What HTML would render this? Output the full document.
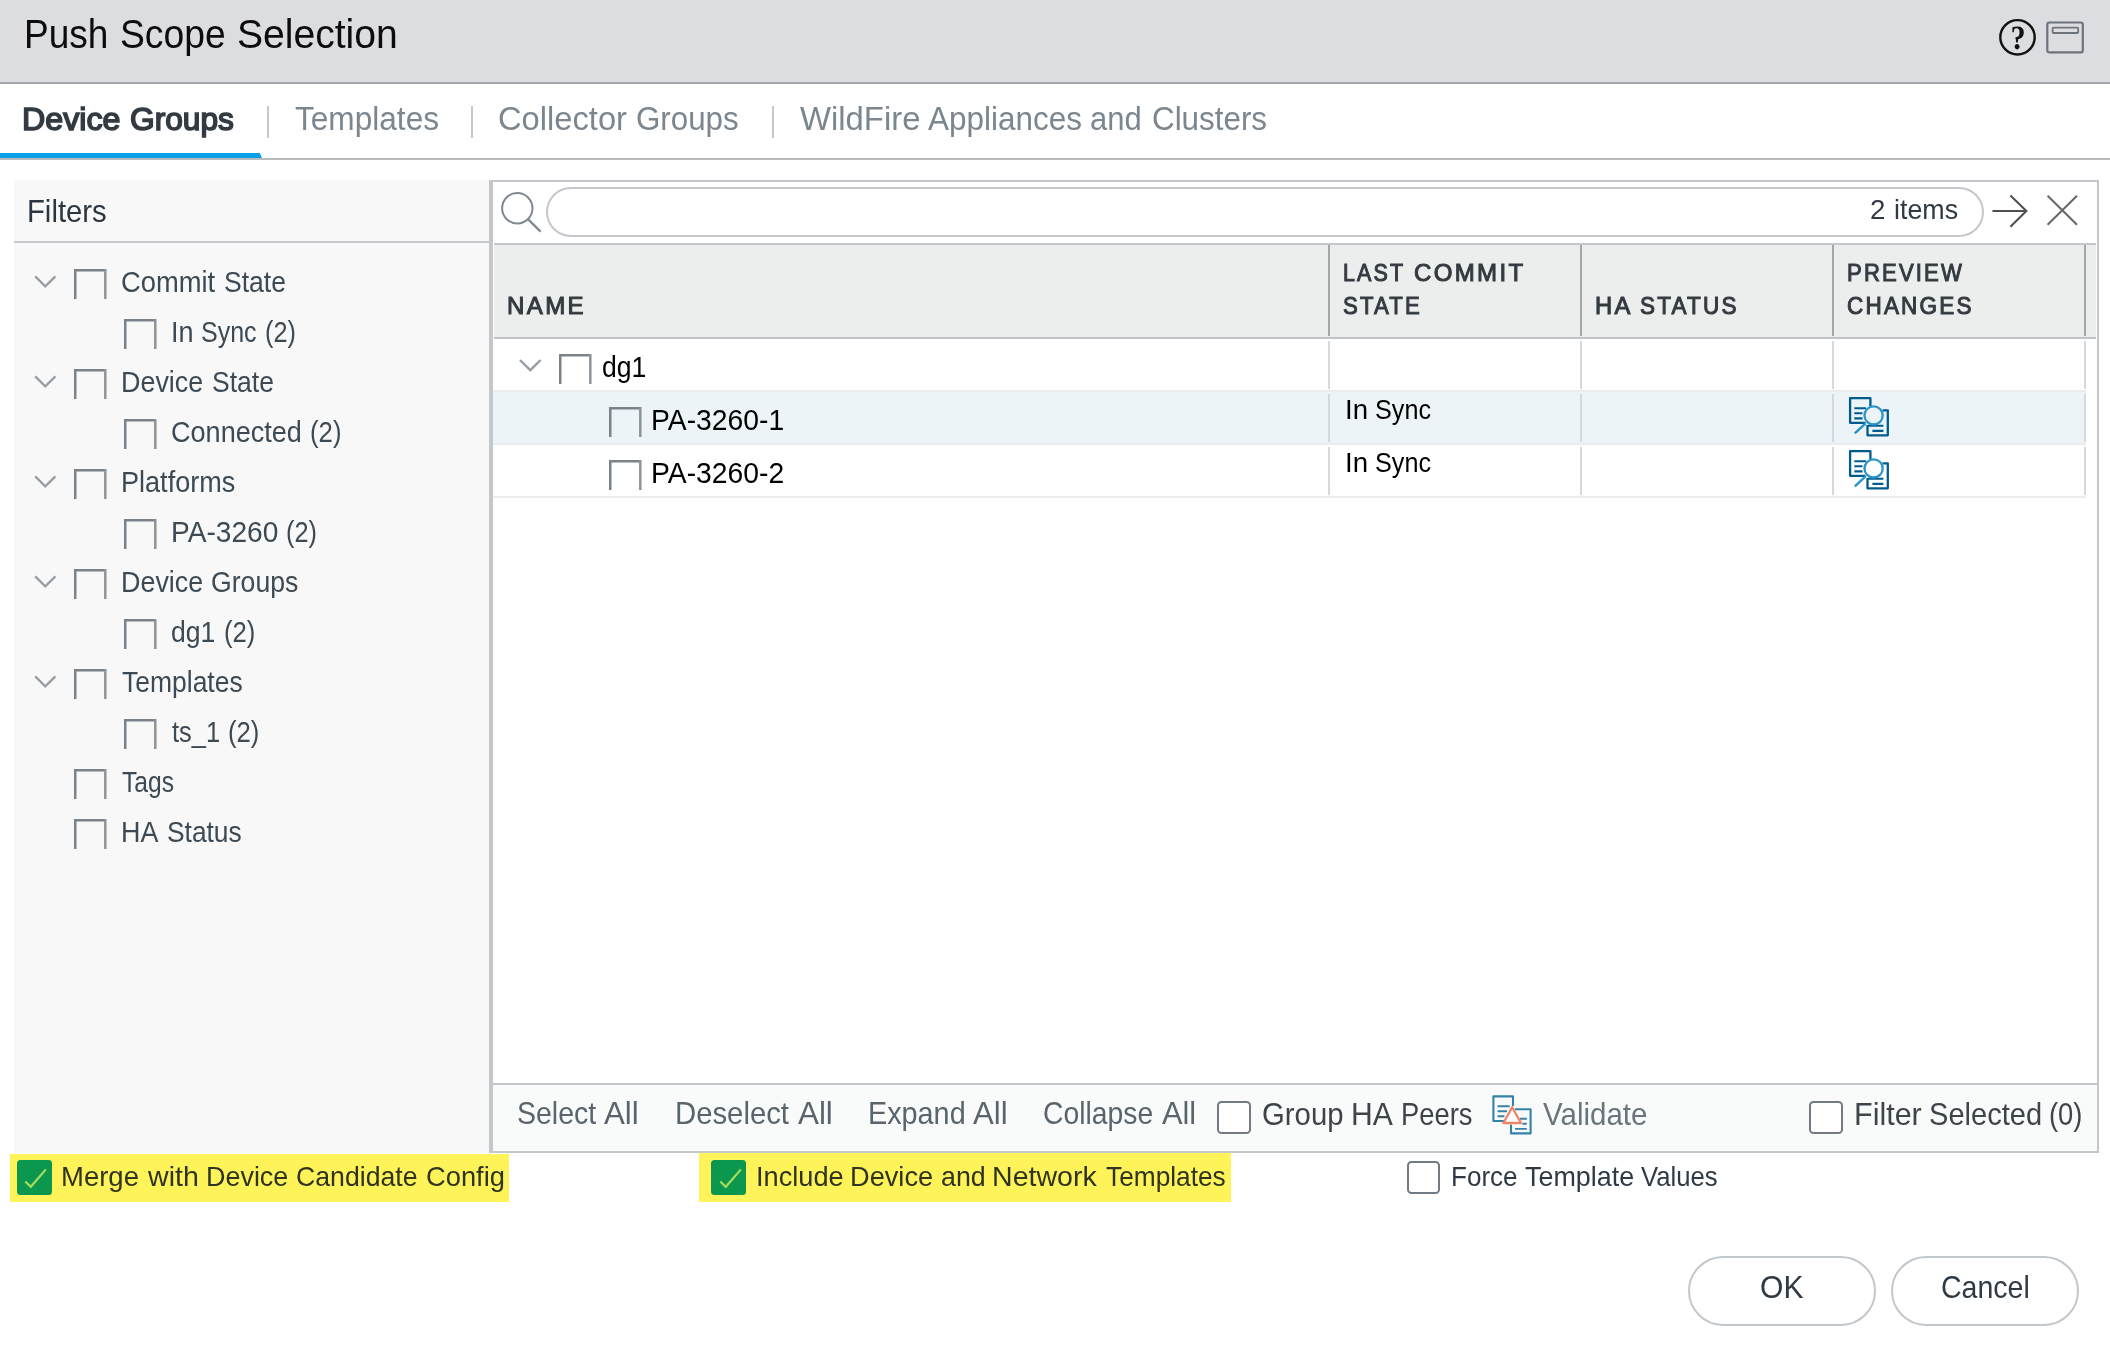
<!DOCTYPE html>
<html lang="en">
<head>
<meta charset="utf-8">
<title>Push Scope Selection</title>
<style>
html,body{margin:0;padding:0;}
body{width:2110px;height:1360px;overflow:hidden;background:#fff;position:relative;font-family:"Liberation Sans",sans-serif;}
.a{position:absolute;display:block;}
#texts{position:absolute;left:0;top:0;width:2110px;height:1360px;will-change:transform;}
.t{position:absolute;white-space:nowrap;transform-origin:0 0;font-family:"Liberation Sans",sans-serif;}
svg{position:absolute;overflow:visible;}
/* title bar */
#titlebar{left:0;top:0;width:2110px;height:82px;background:#dcdde0;border-bottom:2px solid #a0a6aa;}
/* tabs */
#tabline{left:0;top:158px;width:2110px;height:2px;background:#babbbc;}
#tabactive{left:0;top:153px;width:262px;height:5px;background:#0ca0e8;clip-path:polygon(0 0,259.9px 0,262px 5px,0 5px);}
.tabsep{top:106px;width:2px;height:32px;background:#c2c9ce;}
/* filters */
#filters{left:14px;top:180px;width:476px;height:973px;background:#f8f8f8;}
#filterline{left:14px;top:241px;width:476px;height:2px;background:#c6cace;}
/* open-bottom checkbox */

/* grid panel */
#grid{left:489px;top:180px;width:1604px;height:969px;border:2px solid #c4c8cc;border-left-width:4px;background:#fff;}
#ghead{left:494px;top:243px;width:1602px;height:92px;background:#eceeee;border-top:2px solid #c4c8cc;border-bottom:2px solid #c0c4c8;box-sizing:content-box;}
.hsep{top:245px;width:2px;height:90.5px;background:#a0a6ac;}
.rsep{width:2px;background:#d6d9dc;}
.rline{left:493px;width:1593px;height:2px;background:#ececec;}
#rowsel{left:493px;top:392px;width:1593px;height:51px;background:#edf4f7;}
#search{left:546px;top:187px;width:1434px;height:46px;border:2px solid #c4c8cc;border-radius:25px;background:#fff;}
#tbar{left:493px;top:1083px;width:1604px;height:66px;background:#f9fbfb;border-top:2px solid #c4c8cc;}
.cbx{width:29.6px;height:29.6px;border:2.7px solid #727a82;border-radius:4.5px;background:#fff;}
.cbg{width:35px;height:34.6px;border-radius:3.5px;background:#0c974e;}
.hl{background:#fff35a;}
.btn{top:1256px;width:184px;height:66px;border:2px solid #c2c7cb;border-radius:35px;background:#fff;}

</style>
</head>
<body>
<div id="titlebar" class="a"></div>
<svg id="ic-help" style="left:1997px;top:17px" width="41" height="41" viewBox="0 0 41 41"><circle cx="20.5" cy="20.3" r="17.2" fill="none" stroke="#111" stroke-width="2.4"/><path transform="translate(13.58 31.92) scale(0.01465 -0.01646)" fill="#111" d="M445 -29Q375 -29 327.5 19.0Q280 67 280 137Q280 207 327.5 255.0Q375 303 445 303Q514 303 562.5 255.0Q611 207 611 137Q611 68 563.0 19.5Q515 -29 445 -29ZM491 390H388L331 703L426 728Q530 755 571.5 819.5Q613 884 613 994Q613 1131 565.0 1192.5Q517 1254 405 1254Q321 1254 256 1212L213 1018H124V1313Q290 1356 448 1356Q902 1356 902 1001Q902 856 824.5 756.0Q747 656 605 616L518 592Z"/></svg>
<svg id="ic-win" style="left:2044px;top:19px" width="42" height="36" viewBox="0 0 42 36"><rect x="3.3" y="3.5" width="35.5" height="29.9" rx="2" fill="none" stroke="#6c737a" stroke-width="2.2"/><rect x="8.6" y="8.7" width="25.6" height="5.3" rx="1" fill="none" stroke="#6c737a" stroke-width="1.8"/></svg>

<div id="tabline" class="a"></div>
<div id="tabactive" class="a"></div>
<div class="a tabsep" style="left:267px"></div>
<div class="a tabsep" style="left:471px"></div>
<div class="a tabsep" style="left:772px"></div>

<div id="filters" class="a"></div>
<div id="filterline" class="a"></div>
<div id="ftree">
<svg class="chev" style="left:32px;top:273px" width="28" height="18" viewBox="0 0 28 18"><path d="M3.2 3.4 L13.3 13.4 L23.4 3.4" stroke="#989fa6" stroke-width="2.4" fill="none"/></svg>
<svg class="cb" style="left:74px;top:269px" width="33" height="30" viewBox="0 0 33 30"><path d="M1.25 30 V1.25 H31.3" fill="none" stroke="#7a828a" stroke-width="2.5"/><path d="M31.3 0 V30" fill="none" stroke="#8d949a" stroke-width="2.5"/></svg>
<svg class="cb" style="left:124px;top:319px" width="33" height="30" viewBox="0 0 33 30"><path d="M1.25 30 V1.25 H31.3" fill="none" stroke="#7a828a" stroke-width="2.5"/><path d="M31.3 0 V30" fill="none" stroke="#8d949a" stroke-width="2.5"/></svg>
<svg class="chev" style="left:32px;top:373px" width="28" height="18" viewBox="0 0 28 18"><path d="M3.2 3.4 L13.3 13.4 L23.4 3.4" stroke="#989fa6" stroke-width="2.4" fill="none"/></svg>
<svg class="cb" style="left:74px;top:369px" width="33" height="30" viewBox="0 0 33 30"><path d="M1.25 30 V1.25 H31.3" fill="none" stroke="#7a828a" stroke-width="2.5"/><path d="M31.3 0 V30" fill="none" stroke="#8d949a" stroke-width="2.5"/></svg>
<svg class="cb" style="left:124px;top:419px" width="33" height="30" viewBox="0 0 33 30"><path d="M1.25 30 V1.25 H31.3" fill="none" stroke="#7a828a" stroke-width="2.5"/><path d="M31.3 0 V30" fill="none" stroke="#8d949a" stroke-width="2.5"/></svg>
<svg class="chev" style="left:32px;top:473px" width="28" height="18" viewBox="0 0 28 18"><path d="M3.2 3.4 L13.3 13.4 L23.4 3.4" stroke="#989fa6" stroke-width="2.4" fill="none"/></svg>
<svg class="cb" style="left:74px;top:469px" width="33" height="30" viewBox="0 0 33 30"><path d="M1.25 30 V1.25 H31.3" fill="none" stroke="#7a828a" stroke-width="2.5"/><path d="M31.3 0 V30" fill="none" stroke="#8d949a" stroke-width="2.5"/></svg>
<svg class="cb" style="left:124px;top:519px" width="33" height="30" viewBox="0 0 33 30"><path d="M1.25 30 V1.25 H31.3" fill="none" stroke="#7a828a" stroke-width="2.5"/><path d="M31.3 0 V30" fill="none" stroke="#8d949a" stroke-width="2.5"/></svg>
<svg class="chev" style="left:32px;top:573px" width="28" height="18" viewBox="0 0 28 18"><path d="M3.2 3.4 L13.3 13.4 L23.4 3.4" stroke="#989fa6" stroke-width="2.4" fill="none"/></svg>
<svg class="cb" style="left:74px;top:569px" width="33" height="30" viewBox="0 0 33 30"><path d="M1.25 30 V1.25 H31.3" fill="none" stroke="#7a828a" stroke-width="2.5"/><path d="M31.3 0 V30" fill="none" stroke="#8d949a" stroke-width="2.5"/></svg>
<svg class="cb" style="left:124px;top:619px" width="33" height="30" viewBox="0 0 33 30"><path d="M1.25 30 V1.25 H31.3" fill="none" stroke="#7a828a" stroke-width="2.5"/><path d="M31.3 0 V30" fill="none" stroke="#8d949a" stroke-width="2.5"/></svg>
<svg class="chev" style="left:32px;top:673px" width="28" height="18" viewBox="0 0 28 18"><path d="M3.2 3.4 L13.3 13.4 L23.4 3.4" stroke="#989fa6" stroke-width="2.4" fill="none"/></svg>
<svg class="cb" style="left:74px;top:669px" width="33" height="30" viewBox="0 0 33 30"><path d="M1.25 30 V1.25 H31.3" fill="none" stroke="#7a828a" stroke-width="2.5"/><path d="M31.3 0 V30" fill="none" stroke="#8d949a" stroke-width="2.5"/></svg>
<svg class="cb" style="left:124px;top:719px" width="33" height="30" viewBox="0 0 33 30"><path d="M1.25 30 V1.25 H31.3" fill="none" stroke="#7a828a" stroke-width="2.5"/><path d="M31.3 0 V30" fill="none" stroke="#8d949a" stroke-width="2.5"/></svg>
<svg class="cb" style="left:74px;top:769px" width="33" height="30" viewBox="0 0 33 30"><path d="M1.25 30 V1.25 H31.3" fill="none" stroke="#7a828a" stroke-width="2.5"/><path d="M31.3 0 V30" fill="none" stroke="#8d949a" stroke-width="2.5"/></svg>
<svg class="cb" style="left:74px;top:819px" width="33" height="30" viewBox="0 0 33 30"><path d="M1.25 30 V1.25 H31.3" fill="none" stroke="#7a828a" stroke-width="2.5"/><path d="M31.3 0 V30" fill="none" stroke="#8d949a" stroke-width="2.5"/></svg>
</div>

<div id="grid" class="a"></div>
<svg id="ic-search" style="left:498px;top:189px" width="46" height="46" viewBox="0 0 46 46"><circle cx="19.3" cy="19.2" r="15.2" fill="none" stroke="#7f8890" stroke-width="2"/><path d="M30.2 30.4 L42.6 42.6" stroke="#7f8890" stroke-width="2.2" fill="none"/></svg>
<div id="search" class="a"></div>
<svg id="ic-arrow" style="left:1990px;top:193px" width="40" height="36" viewBox="0 0 40 36"><path d="M2.5 18 H36 M20.4 2.6 L36.4 18 L20.4 33.8" stroke="#505050" stroke-width="2.1" fill="none"/></svg>
<svg id="ic-x" style="left:2045px;top:193px" width="36" height="36" viewBox="0 0 36 36"><path d="M2.6 2.7 L32 31.7 M32 2.7 L2.6 31.7" stroke="#64686c" stroke-width="2" fill="none"/></svg>

<div id="ghead" class="a"></div>
<div class="a hsep" style="left:1328px"></div>
<div class="a hsep" style="left:1580px"></div>
<div class="a hsep" style="left:1832px"></div>
<div class="a hsep" style="left:2084px"></div>

<div id="rowsel" class="a"></div>
<div class="a rline" style="top:390px"></div>
<div class="a rline" style="top:443px"></div>
<div class="a rline" style="top:496px"></div>
<div class="a rsep" style="left:1328px;top:341px;height:47.5px"></div>
<div class="a rsep" style="left:1328px;top:394px;height:48px"></div>
<div class="a rsep" style="left:1328px;top:447px;height:48px"></div>
<div class="a rsep" style="left:1580px;top:341px;height:47.5px"></div>
<div class="a rsep" style="left:1580px;top:394px;height:48px"></div>
<div class="a rsep" style="left:1580px;top:447px;height:48px"></div>
<div class="a rsep" style="left:1832px;top:341px;height:47.5px"></div>
<div class="a rsep" style="left:1832px;top:394px;height:48px"></div>
<div class="a rsep" style="left:1832px;top:447px;height:48px"></div>
<div class="a rsep" style="left:2084px;top:341px;height:47.5px"></div>
<div class="a rsep" style="left:2084px;top:394px;height:48px"></div>
<div class="a rsep" style="left:2084px;top:447px;height:48px"></div>

<svg class="chev" style="left:517px;top:357px" width="28" height="18" viewBox="0 0 28 18"><path d="M3 3 L13.3 13.2 L23.6 3" stroke="#989fa6" stroke-width="2.4" fill="none"/></svg>
<svg class="cb" style="left:559px;top:353.8px" width="33" height="30" viewBox="0 0 33 30"><path d="M1.25 30 V1.25 H31.3" fill="none" stroke="#7a828a" stroke-width="2.5"/><path d="M31.3 0 V30" fill="none" stroke="#8d949a" stroke-width="2.5"/></svg><svg class="cb" style="left:609px;top:407px" width="33" height="30" viewBox="0 0 33 30"><path d="M1.25 30 V1.25 H31.3" fill="none" stroke="#7a828a" stroke-width="2.5"/><path d="M31.3 0 V30" fill="none" stroke="#8d949a" stroke-width="2.5"/></svg><svg class="cb" style="left:609px;top:460px" width="33" height="30" viewBox="0 0 33 30"><path d="M1.25 30 V1.25 H31.3" fill="none" stroke="#7a828a" stroke-width="2.5"/><path d="M31.3 0 V30" fill="none" stroke="#8d949a" stroke-width="2.5"/></svg>

<svg class="ic-prev" style="left:0;top:385px" width="2110" height="60" viewBox="0 385 2110 60">
<g fill="none" stroke-width="2.3" stroke-linejoin="round">
<path d="M1870.4 406 V398.1 H1850.1 V422.8 H1865.5" stroke="#005c8e"/>
<path d="M1854.3 408.2 H1866 M1854.3 413.3 H1862.5 M1854.3 418.4 H1862.5" stroke="#005c8e" stroke-width="2.1"/>
<path d="M1882.5 410.3 H1887.8 V435.3 H1867.5 V425 " stroke="#005c8e"/>
<path d="M1868 425.7 H1883.4 M1872.4 430.9 H1883.4" stroke="#005c8e" stroke-width="2.1"/>
<circle cx="1873.6" cy="415.4" r="9.1" stroke="#2b94c8"/>
<path d="M1865.6 423.4 L1854.8 433.4" stroke="#2b94c8" stroke-width="2.4"/>
</g></svg><svg class="ic-prev" style="left:0;top:438px" width="2110" height="60" viewBox="0 385 2110 60">
<g fill="none" stroke-width="2.3" stroke-linejoin="round">
<path d="M1870.4 406 V398.1 H1850.1 V422.8 H1865.5" stroke="#005c8e"/>
<path d="M1854.3 408.2 H1866 M1854.3 413.3 H1862.5 M1854.3 418.4 H1862.5" stroke="#005c8e" stroke-width="2.1"/>
<path d="M1882.5 410.3 H1887.8 V435.3 H1867.5 V425 " stroke="#005c8e"/>
<path d="M1868 425.7 H1883.4 M1872.4 430.9 H1883.4" stroke="#005c8e" stroke-width="2.1"/>
<circle cx="1873.6" cy="415.4" r="9.1" stroke="#2b94c8"/>
<path d="M1865.6 423.4 L1854.8 433.4" stroke="#2b94c8" stroke-width="2.4"/>
</g></svg>

<div id="tbar" class="a"></div>
<div class="a cbx" style="left:1217px;top:1100.5px"></div>
<div class="a cbx" style="left:1809px;top:1100.5px"></div>
<svg id="ic-validate" style="left:1480px;top:1085px" width="80" height="60" viewBox="1480 1085 80 60">
<g fill="none" stroke-width="2.1" stroke-linejoin="round">
<path d="M1513 1106 V1096.4 H1493.4 V1121 H1504" stroke="#3482aa"/>
<path d="M1497.6 1106.2 H1509.6 M1497.6 1111.3 H1507 M1497.6 1116.3 H1504.4" stroke="#3482aa" stroke-width="1.9"/>
<path d="M1515 1109.2 H1530.6 V1133.4 H1511 V1124.5" stroke="#3482aa"/>
<path d="M1520 1118.8 H1526.8 M1522.4 1123.8 H1526.8 M1515 1128.9 H1526.8" stroke="#3482aa" stroke-width="1.9"/>
<path d="M1512.2 1107.2 L1521 1123 H1503.4 Z" stroke="#ef8465" fill="#fdfefe" stroke-width="2.3"/>
</g></svg>

<div class="a hl" style="left:10px;top:1154px;width:499px;height:47.5px"></div>
<div class="a hl" style="left:699px;top:1153px;width:532px;height:48.5px"></div>
<div class="a cbg" style="left:16.5px;top:1160.3px"></div>
<svg style="left:16.5px;top:1161px" width="35" height="34" viewBox="0 0 35 34"><path d="M8.3 20.5 L13.8 25.8 L28.9 8.4" stroke="#a8dc58" stroke-width="2.2" fill="none"/></svg>
<div class="a cbg" style="left:711.3px;top:1160.3px"></div>
<svg style="left:711.5px;top:1161px" width="35" height="34" viewBox="0 0 35 34"><path d="M8.3 20.5 L13.8 25.8 L28.9 8.4" stroke="#a8dc58" stroke-width="2.2" fill="none"/></svg>
<div class="a cbx" style="left:1406.7px;top:1160.5px"></div>

<div class="a btn" style="left:1688px"></div>
<div class="a btn" style="left:1891px"></div>

<div id="texts">
<span class="t" style="left:24.09px;top:9.00px;font-size:41px;line-height:50px;color:#0c0c0c;transform:scaleX(0.9036);">Push</span>
<span class="t" style="left:120.49px;top:9.00px;font-size:41px;line-height:50px;color:#0c0c0c;transform:scaleX(0.9088);">Scope</span>
<span class="t" style="left:237.05px;top:9.00px;font-size:41px;line-height:50px;color:#0c0c0c;transform:scaleX(0.9532);">Selection</span>
<span class="t" style="left:22.19px;top:99.00px;font-size:32px;line-height:40px;color:#333a42;transform:scaleX(1.0060);-webkit-text-stroke:1.6px #333a42;">Device</span>
<span class="t" style="left:129.80px;top:99.00px;font-size:32px;line-height:40px;color:#333a42;transform:scaleX(0.9901);-webkit-text-stroke:1.6px #333a42;">Groups</span>
<span class="t" style="left:294.70px;top:98.00px;font-size:33.5px;line-height:41px;color:#7c868e;transform:scaleX(0.9432);">Templates</span>
<span class="t" style="left:498.42px;top:98.00px;font-size:33.5px;line-height:41px;color:#7c868e;transform:scaleX(0.9754);">Collector</span>
<span class="t" style="left:636.17px;top:98.00px;font-size:33.5px;line-height:41px;color:#7c868e;transform:scaleX(0.9343);">Groups</span>
<span class="t" style="left:800.00px;top:98.00px;font-size:33.5px;line-height:41px;color:#7c868e;transform:scaleX(0.9804);">WildFire</span>
<span class="t" style="left:927.80px;top:98.00px;font-size:33.5px;line-height:41px;color:#7c868e;transform:scaleX(0.9391);">Appliances</span>
<span class="t" style="left:1090.47px;top:98.00px;font-size:33.5px;line-height:41px;color:#7c868e;transform:scaleX(0.9256);">and</span>
<span class="t" style="left:1152.16px;top:98.00px;font-size:33.5px;line-height:41px;color:#7c868e;transform:scaleX(0.9363);">Clusters</span>
<span class="t" style="left:26.88px;top:192.00px;font-size:30.5px;line-height:38px;color:#2c3640;transform:scaleX(0.9594);">Filters</span>
<span class="t" style="left:121.14px;top:264.00px;font-size:28.6px;line-height:36px;color:#3d4a54;transform:scaleX(0.9565);">Commit</span>
<span class="t" style="left:223.77px;top:264.00px;font-size:28.6px;line-height:36px;color:#3d4a54;transform:scaleX(0.9281);">State</span>
<span class="t" style="left:171.01px;top:314.00px;font-size:28.6px;line-height:36px;color:#3d4a54;transform:scaleX(0.9454);">In</span>
<span class="t" style="left:201.32px;top:314.00px;font-size:28.6px;line-height:36px;color:#3d4a54;transform:scaleX(0.8752);">Sync</span>
<span class="t" style="left:265.31px;top:314.00px;font-size:28.6px;line-height:36px;color:#3d4a54;transform:scaleX(0.8851);">(2)</span>
<span class="t" style="left:121.32px;top:364.00px;font-size:28.6px;line-height:36px;color:#3d4a54;transform:scaleX(0.9408);">Device</span>
<span class="t" style="left:211.67px;top:364.00px;font-size:28.6px;line-height:36px;color:#3d4a54;transform:scaleX(0.9281);">State</span>
<span class="t" style="left:171.45px;top:414.00px;font-size:28.6px;line-height:36px;color:#3d4a54;transform:scaleX(0.9465);">Connected</span>
<span class="t" style="left:309.80px;top:414.00px;font-size:28.6px;line-height:36px;color:#3d4a54;transform:scaleX(0.9006);">(2)</span>
<span class="t" style="left:121.31px;top:464.00px;font-size:28.6px;line-height:36px;color:#3d4a54;transform:scaleX(0.9463);">Platforms</span>
<span class="t" style="left:171.33px;top:514.00px;font-size:28.6px;line-height:36px;color:#3d4a54;transform:scaleX(0.9826);">PA-3260</span>
<span class="t" style="left:286.01px;top:514.00px;font-size:28.6px;line-height:36px;color:#3d4a54;transform:scaleX(0.8851);">(2)</span>
<span class="t" style="left:121.32px;top:564.00px;font-size:28.6px;line-height:36px;color:#3d4a54;transform:scaleX(0.9408);">Device</span>
<span class="t" style="left:210.97px;top:564.00px;font-size:28.6px;line-height:36px;color:#3d4a54;transform:scaleX(0.9311);">Groups</span>
<span class="t" style="left:171.27px;top:614.00px;font-size:28.6px;line-height:36px;color:#3d4a54;transform:scaleX(0.9300);">dg1</span>
<span class="t" style="left:223.80px;top:614.00px;font-size:28.6px;line-height:36px;color:#3d4a54;transform:scaleX(0.8975);">(2)</span>
<span class="t" style="left:121.50px;top:664.00px;font-size:28.6px;line-height:36px;color:#3d4a54;transform:scaleX(0.9260);">Templates</span>
<span class="t" style="left:172.40px;top:714.00px;font-size:28.6px;line-height:36px;color:#3d4a54;transform:scaleX(0.8882);">ts_1</span>
<span class="t" style="left:228.20px;top:714.00px;font-size:28.6px;line-height:36px;color:#3d4a54;transform:scaleX(0.8975);">(2)</span>
<span class="t" style="left:121.50px;top:764.00px;font-size:28.6px;line-height:36px;color:#3d4a54;transform:scaleX(0.8619);">Tags</span>
<span class="t" style="left:121.32px;top:814.00px;font-size:28.6px;line-height:36px;color:#3d4a54;transform:scaleX(0.9418);">HA</span>
<span class="t" style="left:166.88px;top:814.00px;font-size:28.6px;line-height:36px;color:#3d4a54;transform:scaleX(0.9215);">Status</span>
<span class="t" style="left:506.59px;top:291.00px;font-size:23.5px;line-height:30px;color:#333a40;transform:scaleX(1.0240);letter-spacing:2.3px;-webkit-text-stroke:1.0px #333a40;">NAME</span>
<span class="t" style="left:1342.94px;top:258.00px;font-size:23.5px;line-height:30px;color:#333a40;transform:scaleX(0.9140);letter-spacing:2.3px;-webkit-text-stroke:1.0px #333a40;">LAST</span>
<span class="t" style="left:1413.99px;top:258.00px;font-size:23.5px;line-height:30px;color:#333a40;transform:scaleX(1.0223);letter-spacing:2.3px;-webkit-text-stroke:1.0px #333a40;">COMMIT</span>
<span class="t" style="left:1342.93px;top:291.00px;font-size:23.5px;line-height:30px;color:#333a40;transform:scaleX(0.9422);letter-spacing:2.3px;-webkit-text-stroke:1.0px #333a40;">STATE</span>
<span class="t" style="left:1594.89px;top:291.00px;font-size:23.5px;line-height:30px;color:#333a40;transform:scaleX(1.0122);letter-spacing:2.3px;-webkit-text-stroke:1.0px #333a40;">HA</span>
<span class="t" style="left:1640.42px;top:291.00px;font-size:23.5px;line-height:30px;color:#333a40;transform:scaleX(0.9576);letter-spacing:2.3px;-webkit-text-stroke:1.0px #333a40;">STATUS</span>
<span class="t" style="left:1847.13px;top:258.00px;font-size:23.5px;line-height:30px;color:#333a40;transform:scaleX(0.9399);letter-spacing:2.3px;-webkit-text-stroke:1.0px #333a40;">PREVIEW</span>
<span class="t" style="left:1846.52px;top:291.00px;font-size:23.5px;line-height:30px;color:#333a40;transform:scaleX(0.9572);letter-spacing:2.3px;-webkit-text-stroke:1.0px #333a40;">CHANGES</span>
<span class="t" style="left:601.57px;top:349.00px;font-size:28.6px;line-height:36px;color:#000;transform:scaleX(0.9300);">dg1</span>
<span class="t" style="left:651.12px;top:402.00px;font-size:28.6px;line-height:36px;color:#000;transform:scaleX(0.9896);">PA-3260-1</span>
<span class="t" style="left:651.12px;top:455.00px;font-size:28.6px;line-height:36px;color:#000;transform:scaleX(0.9896);">PA-3260-2</span>
<span class="t" style="left:1344.76px;top:391.00px;font-size:28.5px;line-height:36px;color:#000;transform:scaleX(0.9690);">In</span>
<span class="t" style="left:1374.62px;top:391.00px;font-size:28.5px;line-height:36px;color:#000;transform:scaleX(0.8839);">Sync</span>
<span class="t" style="left:1344.76px;top:444.00px;font-size:28.5px;line-height:36px;color:#000;transform:scaleX(0.9690);">In</span>
<span class="t" style="left:1374.62px;top:444.00px;font-size:28.5px;line-height:36px;color:#000;transform:scaleX(0.8839);">Sync</span>
<span class="t" style="left:1870.13px;top:191.00px;font-size:28.5px;line-height:36px;color:#2f3a44;transform:scaleX(0.9714);">2</span>
<span class="t" style="left:1893.66px;top:191.00px;font-size:28.5px;line-height:36px;color:#2f3a44;transform:scaleX(0.9410);">items</span>
<span class="t" style="left:516.67px;top:1094.00px;font-size:30.5px;line-height:38px;color:#5a646c;transform:scaleX(0.9348);">Select</span>
<span class="t" style="left:604.40px;top:1094.00px;font-size:30.5px;line-height:38px;color:#5a646c;transform:scaleX(1.0243);">All</span>
<span class="t" style="left:674.68px;top:1094.00px;font-size:30.5px;line-height:38px;color:#5a646c;transform:scaleX(0.9608);">Deselect</span>
<span class="t" style="left:797.70px;top:1094.00px;font-size:30.5px;line-height:38px;color:#5a646c;transform:scaleX(1.0274);">All</span>
<span class="t" style="left:867.71px;top:1094.00px;font-size:30.5px;line-height:38px;color:#5a646c;transform:scaleX(0.9439);">Expand</span>
<span class="t" style="left:972.80px;top:1094.00px;font-size:30.5px;line-height:38px;color:#5a646c;transform:scaleX(1.0212);">All</span>
<span class="t" style="left:1042.77px;top:1094.00px;font-size:30.5px;line-height:38px;color:#5a646c;transform:scaleX(0.9279);">Collapse</span>
<span class="t" style="left:1161.90px;top:1094.00px;font-size:30.5px;line-height:38px;color:#5a646c;transform:scaleX(1.0087);">All</span>
<span class="t" style="left:1261.64px;top:1095.00px;font-size:30.5px;line-height:38px;color:#3d444a;transform:scaleX(0.9613);">Group</span>
<span class="t" style="left:1350.93px;top:1095.00px;font-size:30.5px;line-height:38px;color:#3d444a;transform:scaleX(0.9872);">HA</span>
<span class="t" style="left:1401.31px;top:1095.00px;font-size:30.5px;line-height:38px;color:#3d444a;transform:scaleX(0.8963);">Peers</span>
<span class="t" style="left:1542.80px;top:1095.00px;font-size:30.5px;line-height:38px;color:#6a747c;transform:scaleX(0.9673);">Validate</span>
<span class="t" style="left:1853.90px;top:1095.00px;font-size:30.5px;line-height:38px;color:#3d444a;transform:scaleX(0.9997);">Filter</span>
<span class="t" style="left:1929.15px;top:1095.00px;font-size:30.5px;line-height:38px;color:#3d444a;transform:scaleX(0.9531);">Selected</span>
<span class="t" style="left:2049.40px;top:1095.00px;font-size:30.5px;line-height:38px;color:#3d444a;transform:scaleX(0.8969);">(0)</span>
<span class="t" style="left:60.87px;top:1158.00px;font-size:28.5px;line-height:36px;color:#2e3420;transform:scaleX(0.9649);">Merge</span>
<span class="t" style="left:148.10px;top:1158.00px;font-size:28.5px;line-height:36px;color:#2e3420;transform:scaleX(1.0034);">with</span>
<span class="t" style="left:206.31px;top:1158.00px;font-size:28.5px;line-height:36px;color:#2e3420;transform:scaleX(0.9447);">Device</span>
<span class="t" style="left:296.46px;top:1158.00px;font-size:28.5px;line-height:36px;color:#2e3420;transform:scaleX(0.9353);">Candidate</span>
<span class="t" style="left:425.84px;top:1158.00px;font-size:28.5px;line-height:36px;color:#2e3420;transform:scaleX(0.9574);">Config</span>
<span class="t" style="left:756.29px;top:1158.00px;font-size:28.5px;line-height:36px;color:#2e3420;transform:scaleX(0.9534);">Include</span>
<span class="t" style="left:850.49px;top:1158.00px;font-size:28.5px;line-height:36px;color:#2e3420;transform:scaleX(0.9541);">Device</span>
<span class="t" style="left:940.66px;top:1158.00px;font-size:28.5px;line-height:36px;color:#2e3420;transform:scaleX(0.9409);">and</span>
<span class="t" style="left:991.90px;top:1158.00px;font-size:28.5px;line-height:36px;color:#2e3420;transform:scaleX(1.0022);">Network</span>
<span class="t" style="left:1106.10px;top:1158.00px;font-size:28.5px;line-height:36px;color:#2e3420;transform:scaleX(0.9218);">Templates</span>
<span class="t" style="left:1451.27px;top:1158.00px;font-size:28.5px;line-height:36px;color:#2f3a44;transform:scaleX(0.9143);">Force</span>
<span class="t" style="left:1524.80px;top:1158.00px;font-size:28.5px;line-height:36px;color:#2f3a44;transform:scaleX(0.9434);">Template</span>
<span class="t" style="left:1641.20px;top:1158.00px;font-size:28.5px;line-height:36px;color:#2f3a44;transform:scaleX(0.9012);">Values</span>
<span class="t" style="left:1759.71px;top:1268.00px;font-size:30.5px;line-height:38px;color:#2f3a44;transform:scaleX(0.9854);">OK</span>
<span class="t" style="left:1940.56px;top:1268.00px;font-size:30.5px;line-height:38px;color:#2f3a44;transform:scaleX(0.9353);">Cancel</span>
</div>
</body>
</html>
